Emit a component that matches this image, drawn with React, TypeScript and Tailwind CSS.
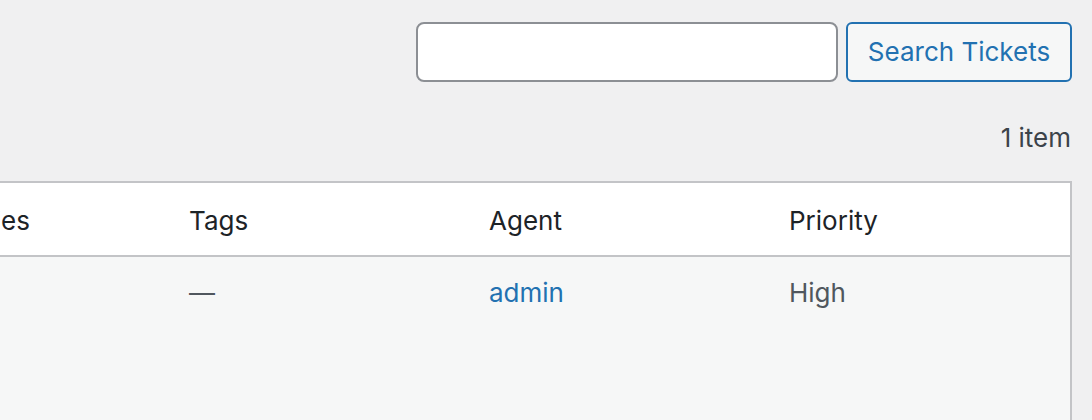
import React from 'react';

const columns = ['Categories', 'Tags', 'Agent', 'Priority'];

export default function App() {
    return (
        <div
            className="w-[1092px] h-[420px] overflow-hidden bg-[#f0f0f1] text-[26px] text-[#1d2327]"
            style={{ fontFamily: 'Inter, "Liberation Sans", sans-serif' }}
        >
            {/* Search box */}
            <div className="flex justify-end gap-[8px] pt-[22px] pr-[20px]">
                <input
                    type="search"
                    className="w-[422px] h-[60px] rounded-[8px] border-2 border-[#8c8f94] bg-white px-4 outline-none"
                />
                <button className="h-[60px] w-[226px] rounded-[6px] border-2 border-[#2271b1] bg-[#f6f7f7] text-[#2271b1] leading-none">
                    Search Tickets
                </button>
            </div>

            {/* Tablenav */}
            <div className="flex justify-end pr-[21px] pt-[37px] pb-[24px] leading-[38px] text-[#3c434a]">
                1 item
            </div>

            {/* Table */}
            <div className="mr-[20px] border-2 border-l-0 border-[#c3c4c7] bg-[#f6f7f7] h-[300px]">
                <div className="grid grid-cols-[169px_300px_300px_1fr] bg-white border-b-2 border-[#c3c4c7]">
                    <div className="flex justify-end overflow-hidden whitespace-nowrap pt-[18px] pb-[15px] pr-[139px] leading-[39px]">
                        {columns[0]}
                    </div>
                    {columns.slice(1).map((c) => (
                        <div key={c} className="pt-[18px] pb-[15px] px-[20px] leading-[39px]">
                            {c}
                        </div>
                    ))}
                </div>
                <div className="grid grid-cols-[169px_300px_300px_1fr] text-[#50575e]">
                    <div className="py-[16px] leading-[39px]" />
                    <div className="py-[16px] px-[20px] leading-[39px]">—</div>
                    <div className="py-[16px] px-[20px] leading-[39px]">
                        <a href="#" className="text-[#2271b1]">admin</a>
                    </div>
                    <div className="py-[16px] px-[20px] leading-[39px]">High</div>
                </div>
            </div>
        </div>
    );
}
